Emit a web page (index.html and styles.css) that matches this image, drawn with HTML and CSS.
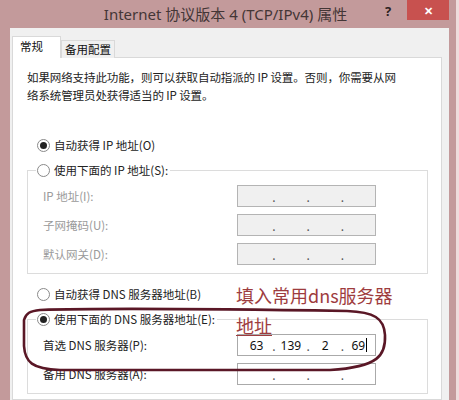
FILE: index.html
```html
<!DOCTYPE html>
<html lang="zh-CN">
<head>
    <meta charset="UTF-8">
    <title>Internet 协议版本 4 (TCP/IPv4) 属性</title>
    <link rel="stylesheet" href="styles.css">
</head>
<body>
    <div class="window">
        <div class="titlebar">
            <span class="title">Internet 协议版本 4 (TCP/IPv4) 属性</span>
            <span class="help">?</span>
            <span class="close">&#x2715;</span>
        </div>

        <div class="client">
            <div class="tabs">
                <span class="tab active">常规</span>
                <span class="tab">备用配置</span>
            </div>

            <div class="panel">
                <p class="intro">如果网络支持此功能，则可以获取自动指派的 IP 设置。否则，你需要从网<br>络系统管理员处获得适当的 IP 设置。</p>

                <div class="radio checked first"><span class="dot"></span>自动获得 IP 地址(O)</div>
                <fieldset class="group">
                    <legend class="radio"><span class="dot"></span>使用下面的 IP 地址(S):</legend>
                    <div class="rows">
                        <div class="row disabled">
                            <span class="label">IP 地址(I):</span>
                            <div class="ip"><span></span><i>.</i><span></span><i>.</i><span></span><i>.</i><span></span></div>
                        </div>
                        <div class="row disabled">
                            <span class="label">子网掩码(U):</span>
                            <div class="ip"><span></span><i>.</i><span></span><i>.</i><span></span><i>.</i><span></span></div>
                        </div>
                        <div class="row disabled">
                            <span class="label">默认网关(D):</span>
                            <div class="ip"><span></span><i>.</i><span></span><i>.</i><span></span><i>.</i><span></span></div>
                        </div>
                    </div>
                </fieldset>

                <div class="radio second"><span class="dot"></span>自动获得 DNS 服务器地址(B)</div>
                <fieldset class="group">
                    <legend class="radio checked"><span class="dot"></span>使用下面的 DNS 服务器地址(E):</legend>
                    <div class="rows">
                        <div class="row">
                            <span class="label">首选 DNS 服务器(P):</span>
                            <div class="ip active"><span>63</span><i>.</i><span>139</span><i>.</i><span>2</span><i>.</i><span>69<b class="caret"></b></span></div>
                        </div>
                        <div class="row">
                            <span class="label">备用 DNS 服务器(A):</span>
                            <div class="ip active"><span></span><i>.</i><span></span><i>.</i><span></span><i>.</i><span></span></div>
                        </div>
                    </div>
                </fieldset>
            </div>
        </div>

        <!-- hand-drawn annotation on top of the screenshot -->
        <div class="note">
            <span>填入常用dns服务器</span>
            <u>地址</u>
        </div>
        <svg class="loop" width="459" height="400" viewBox="0 0 459 400">
            <path d="M 24 320 C 26 313, 30 311, 40 310 C 100 308, 220 309, 347 311 C 374 312, 384 318, 385 335 C 386 355, 379 367, 330 370 L 60 370 C 32 369, 25 362, 24 346 Z"
                  fill="none" stroke="#5a1726" stroke-width="2.6" stroke-linejoin="round"/>
        </svg>
    </div>
</body>
</html>
```

FILE: styles.css
```css
* {
    margin: 0;
    padding: 0;
    box-sizing: border-box;
}

body {
    width: 459px;
    height: 400px;
    overflow: hidden;
    background: #eedcdc;
    font-family: 'Noto Sans CJK SC', sans-serif;
    font-size: 11.5px;
    color: #222;
}

.window {
    position: relative;
    width: 456px;
    height: 400px;
    background: #c39a9b;
    display: flex;
    flex-direction: column;
}

/* title bar */

.titlebar {
    height: 28px;
    display: flex;
    align-items: flex-start;
    padding-right: 7px;
}

.title {
    flex: 1;
    padding-left: 66px;
    text-align: center;
    line-height: 28px;
    font-family: 'Noto Sans', 'Noto Sans CJK SC', sans-serif;
    font-size: 15px;
    color: #433636;
    white-space: nowrap;
}

.help {
    width: 22px;
    line-height: 22px;
    font-family: 'Noto Sans', sans-serif;
    font-weight: bold;
    font-size: 13px;
    color: #2b2222;
}

.close {
    width: 42px;
    height: 20px;
    background: #c8514f;
    color: #fff;
    text-align: center;
    line-height: 20px;
    font-size: 11px;
    font-weight: bold;
}

/* client area */

.client {
    flex: 1;
    margin: 0 7px 0 10px;
    background: #f0f0f0;
    padding: 8px 7px 0 2px;
    display: flex;
    flex-direction: column;
    overflow: hidden;
}

.tabs {
    display: flex;
    align-items: flex-end;
    height: 22px;
    position: relative;
    z-index: 1;
    margin-bottom: -1px;
}

.tab {
    height: 18px;
    line-height: 16px;
    padding: 0 3px;
    border: 1px solid #d9d9d9;
    border-bottom: none;
    background: #f0f0f0;
    white-space: nowrap;
    color: #111;
}

.tab.active {
    width: 49px;
    height: 22px;
    line-height: 19px;
    padding-left: 7px;
    background: #fff;
}

.panel {
    flex: 1;
    background: #fff;
    border: 1px solid #d9d9d9;
    padding: 10px 13px 0 14px;
}

.intro {
    line-height: 18px;
    white-space: nowrap;
    letter-spacing: -0.1px;
}

/* radios */

.radio {
    display: flex;
    align-items: center;
    height: 20px;
    white-space: nowrap;
}

.radio.first {
    margin-top: 31px;
    padding-left: 10px;
}

.radio.second {
    margin-top: 10px;
    padding-left: 10px;
}

.dot {
    width: 13px;
    height: 13px;
    border: 1px solid #8a8a8a;
    border-radius: 50%;
    background: #fff;
    margin-right: 4px;
    display: flex;
    align-items: center;
    justify-content: center;
}

.checked .dot::after {
    content: "";
    width: 7px;
    height: 7px;
    border-radius: 50%;
    background: #222;
}

/* group boxes */

.group {
    margin-top: 5px;
    border: 1px solid #dcdcdc;
    padding: 0;
}

.group legend {
    margin-left: 8px;
    padding: 0 2px 0 1px;
}

.rows {
    padding: 5px 0 8px 15px;
    display: flex;
    flex-direction: column;
    gap: 7px;
}

.row {
    display: flex;
    align-items: center;
    height: 22px;
}

.label {
    width: 194px;
    white-space: nowrap;
}

.row.disabled .label {
    color: #9a9a9a;
}

.ip {
    width: 139px;
    height: 22px;
    border: 1px solid #b4b4b4;
    background: #f0f0f0;
    display: flex;
    align-items: center;
    padding-left: 3px;
}

.ip.active {
    background: #fff;
    border-color: #aaaaaa;
}

.ip span {
    flex: 1;
    display: flex;
    justify-content: center;
    align-items: center;
    color: #111;
    font-family: 'Noto Sans', sans-serif;
    font-size: 12px;
}

.ip i {
    width: 3px;
    font-style: normal;
    text-align: center;
    color: #555;
    font-size: 12px;
}

.caret {
    width: 1px;
    height: 14px;
    background: #000;
    margin-left: 1px;
}

/* annotation */

.note {
    position: absolute;
    left: 236px;
    top: 286px;
    display: flex;
    flex-direction: column;
    align-items: flex-start;
    gap: 12px;
    font-size: 18px;
    line-height: 19px;
    color: #9e3c3e;
    white-space: nowrap;
}

.note u {
    line-height: 17px;
    text-underline-offset: 2px;
}

.loop {
    position: absolute;
    left: 0;
    top: 0;
    pointer-events: none;
}
```
